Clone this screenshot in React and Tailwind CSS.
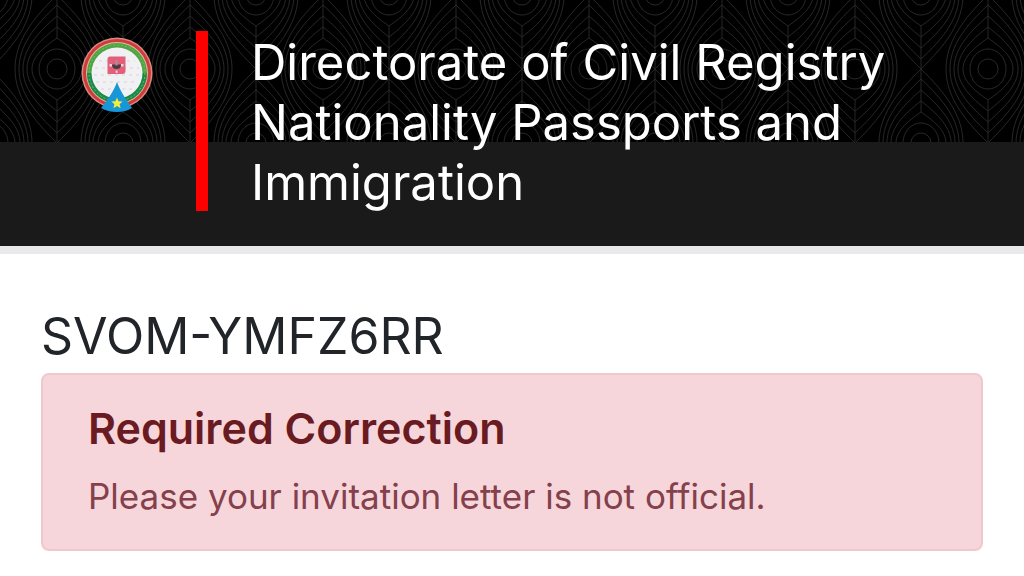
const rings = [
  { w: 25, t: 31 },
  { w: 30, t: 42 },
  { w: 34, t: 53 },
  { w: 38, t: 64 },
  { w: 42, t: 74 },
];

function lens({ w, t }) {
  const a = w * 0.6;
  const b = t * 0.67;
  const c = t * 0.36;
  return `M0 ${-t}C${a} ${-b} ${w} ${-c} ${w} 0C${w} ${c} ${a} ${b} 0 ${t}C${-a} ${b} ${-w} ${c} ${-w} 0C${-w} ${-c} ${-a} ${-b} 0 ${-t}Z`;
}

function Motif({ x, y }) {
  return (
    <g transform={`translate(${x} ${y})`}>
      <circle r="10" />
      <ellipse rx="18" ry="20" />
      {rings.map((ring) => (
        <path key={ring.w} d={lens(ring)} />
      ))}
      <path d="M0 -74V-31M0 31V74" />
    </g>
  );
}

function HeaderPattern() {
  return (
    <svg className="absolute inset-x-0 top-0 h-[142px] w-full bg-black" aria-hidden="true">
      <defs>
        <pattern id="motifs" x="-10" y="-5" width="133" height="148" patternUnits="userSpaceOnUse">
          <g fill="none" stroke="#262626" strokeWidth="1">
            <Motif x={0} y={0} />
            <Motif x={133} y={0} />
            <Motif x={0} y={148} />
            <Motif x={133} y={148} />
            <Motif x={67} y={74} />
          </g>
        </pattern>
      </defs>
      <rect width="100%" height="100%" fill="url(#motifs)" />
    </svg>
  );
}

function Emblem() {
  return (
    <svg viewBox="0 0 72 77" className="w-[72px] shrink-0" role="img" aria-label="Emblem">
      <circle cx="36" cy="36" r="35.5" fill="#d98a80" />
      <circle cx="36" cy="36" r="34" fill="#d13a3c" />
      <circle cx="36" cy="36" r="31" fill="#e3b9a0" />
      <circle cx="36" cy="36" r="30" fill="#4fa546" />
      <path d="M6 36a30 30 0 0 0 60 0" fill="#188a4c" />
      <circle cx="36" cy="36" r="28" fill="none" stroke="#83b84f" strokeWidth="1" strokeDasharray="2 2" />
      <circle cx="36" cy="36" r="25.5" fill="#f1f1f3" />
      <g fill="none" stroke="#e2e2e7" strokeWidth="2" strokeDasharray="3 4">
        <path d="M18 24H54M14 31H58M13 38H59M15 45H57M20 52H52" />
      </g>
      <path d="M29 19.500H44.500V34Q44.500 37 41.500 37H26.500V22Q26.500 19.500 29 19.500Z" fill="#e2607a" />
      <path d="M31 27.500h9q0 4.500-4.500 4.500t-4.500-4.500z" fill="#4b3a42" />
      <path d="M34.500 23h2v5.500h-2z" fill="#a3949b" />
      <path d="M28.500 27h2.500v2.500h-2.500zM40 27h2.500v2.500H40zM34.700 33.500h1.800v2.500h-1.800z" fill="#f6d3da" />
      <path d="M36 45C39 54 45 62 51 71Q45 75 36 75T20 71C27 62 33 54 36 45Z" fill="#1796d8" />
      <path d="M36 60.500l1.600 3.800 4 .3-3 2.700 1 4-3.600-2.200-3.600 2.200 1-4-3-2.700 4-.3z" fill="#f3ee3c" />
    </svg>
  );
}

export default function App() {
  return (
    <div className="min-h-screen bg-white font-['Inter','Liberation_Sans',sans-serif]">
      <header className="relative border-b-8 border-[#e9e9ec] bg-[#1a1a1a] pt-[31px] pb-[33px]">
        <HeaderPattern />
        <div className="relative flex items-start pr-16 pl-[81px]">
          <div className="pt-[6px]">
            <Emblem />
          </div>
          <div className="mb-[2px] ml-[43px] w-3 shrink-0 self-stretch bg-[#ff0000]" />
          <h1 className="max-w-[690px] pt-[2px] pl-[43px] text-[49px] leading-[60px] font-normal text-white">
            Directorate of Civil Registry Nationality Passports and Immigration
          </h1>
        </div>
      </header>

      <main className="px-[41px] pt-[52px] pb-6">
        <h2 className="text-[50px] leading-[60px] font-normal text-[#212529]">SVOM-YMFZ6RR</h2>
        <div role="alert" className="mt-[7px] rounded-lg border-2 border-[#f0c8ce] bg-[#f6d6db] px-[45px] pt-[27px] pb-[26px]">
          <h3 className="text-[43px] leading-[52px] font-semibold text-[#6a1a21]">Required Correction</h3>
          <p className="mt-4 text-[35px] leading-[53px] text-[#84404b]">
            Please your invitation letter is not official.
          </p>
        </div>
      </main>
    </div>
  );
}
